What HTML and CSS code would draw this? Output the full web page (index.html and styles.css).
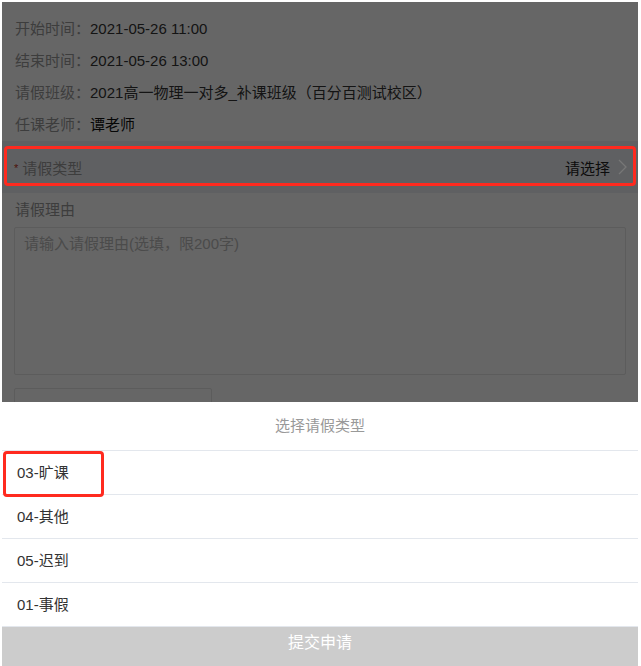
FILE: index.html
```html
<!DOCTYPE html>
<html lang="zh">
<head>
<meta charset="utf-8">
<link rel="stylesheet" href="styles.css">
</head>
<body>
<div class="frame">
  <div class="page">
    <div class="info">
      <div class="info-row"><span class="lbl">开始时间：</span><span class="val">2021-05-26 11:00</span></div>
      <div class="info-row"><span class="lbl">结束时间：</span><span class="val">2021-05-26 13:00</span></div>
      <div class="info-row"><span class="lbl">请假班级：</span><span class="val">2021高一物理一对多_补课班级（百分百测试校区）</span></div>
      <div class="info-row"><span class="lbl">任课老师：</span><span class="val dark">谭老师</span></div>
    </div>
    <div class="band">
      <div class="type-row">
        <span class="req">*</span><span class="type-lbl">请假类型</span>
        <span class="type-val">请选择</span>
        <svg class="chev" width="9" height="16" viewBox="0 0 9 16"><path d="M1 1 L8 8 L1 15" fill="none" stroke="#777" stroke-width="1.3"/></svg>
      </div>
      <div class="annot annot-type"></div>
    </div>
    <div class="reason">
      <div class="reason-lbl">请假理由</div>
      <div class="textarea">请输入请假理由(选填，限200字)</div>
      <div class="upload"></div>
    </div>
  </div>
  <div class="mask"></div>
  <div class="sheet">
    <div class="sheet-title">选择请假类型</div>
    <div class="opt">03-旷课<div class="annot annot-opt"></div></div>
    <div class="opt">04-其他</div>
    <div class="opt">05-迟到</div>
    <div class="opt">01-事假</div>
    <div class="submit">提交申请</div>
  </div>
</div>
</body>
</html>
```
FILE: styles.css
```css
html, body {
  margin: 0;
  padding: 0;
  background: #fff;
  height: 666px;
  overflow: hidden;
}
body {
  font-family: "Liberation Sans", "Noto Sans CJK SC", sans-serif;
  font-size: 15px;
  color: #333;
}
.frame {
  position: relative;
  margin: 2px 0 0 2px;
  width: 636px;
  height: 664px;
  overflow: hidden;
  border-right: 1px solid #fff;
  box-shadow: 3px 0 0 0 #fff, 4px 0 0 0 #e0e0e0;
}
.page {
  background: #fff;
  height: 664px;
}
.info {
  padding: 11px 13px 0 13px;
}
.info-row {
  height: 32px;
  line-height: 32px;
  white-space: nowrap;
}
.lbl { color: #999; }
.val { color: #333; }
.val.dark { color: #111; }
.band {
  position: relative;
  background: #eef0f4;
  height: 52px;
  display: flex;
  align-items: center;
}
.type-row {
  flex: 1;
  display: flex;
  align-items: center;
  padding: 0 11px 0 12px;
  height: 38px;
}
.req {
  color: #c03020;
  font-size: 11px;
  margin-right: 4px;
  position: relative;
  top: 1px;
}
.type-lbl { color: #999; flex: 1; }
.type-val { color: #222; margin-right: 8px; }
.chev {
  display: block;
  position: relative;
  z-index: 3;
}
.annot {
  position: absolute;
  border: 3px solid #ff2a1f;
  border-radius: 4px;
  z-index: 5;
  pointer-events: none;
}
.annot-type {
  left: 2px;
  top: 5px;
  width: 626px;
  height: 34px;
}
.reason {
  padding: 7px 12px 0 12px;
}
.reason-lbl {
  color: #999;
  line-height: 20px;
  padding-left: 1px;
}
.textarea {
  margin-top: 7px;
  border: 1px solid #e6e6e6;
  border-radius: 2px;
  color: #bbb;
  padding: 4px 9px;
  box-sizing: border-box;
  height: 148px;
}
.upload {
  margin-top: 13px;
  width: 196px;
  height: 60px;
  border: 1px solid #e6e6e6;
  border-radius: 2px;
}
.mask {
  position: absolute;
  inset: 0;
  background: rgba(0, 0, 0, 0.6);
  z-index: 2;
}
.sheet {
  position: absolute;
  left: 0;
  right: 0;
  bottom: 0;
  z-index: 3;
  background: #fff;
}
.sheet-title {
  height: 48px;
  line-height: 48px;
  text-align: center;
  color: #999;
  border-bottom: 1px solid #e3e7ed;
}
.opt {
  position: relative;
  height: 43px;
  line-height: 43px;
  padding-left: 15px;
  color: #333;
  border-bottom: 1px solid #e3e7ed;
}
.annot-opt {
  left: 1px;
  top: 0;
  width: 95px;
  height: 40px;
}
.submit {
  height: 39px;
  line-height: 31px;
  background: #cccccc;
  color: #fff;
  text-align: center;
  font-size: 16px;
}
```
